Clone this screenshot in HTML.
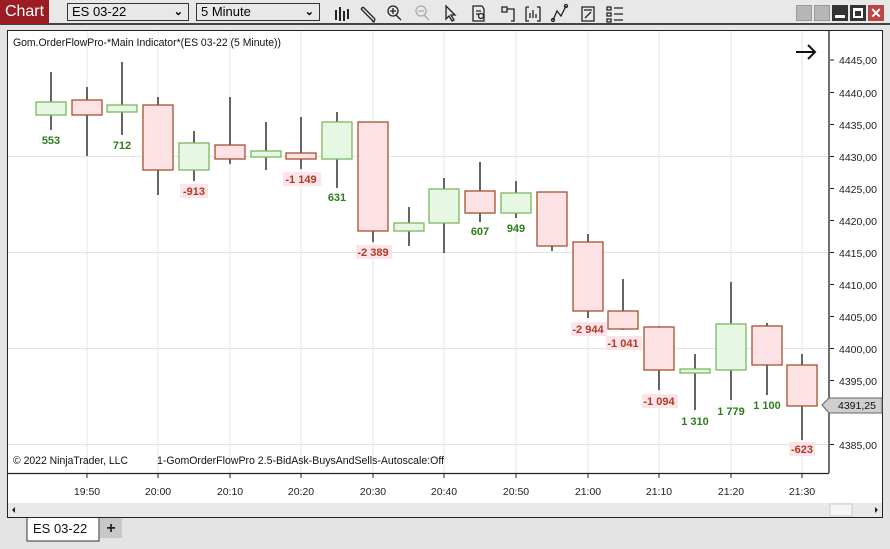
<!DOCTYPE html>
<html><head><meta charset="utf-8"><style>
*{margin:0;padding:0;box-sizing:border-box}
body{width:890px;height:549px;overflow:hidden;background:#e4e4e4;font-family:"Liberation Sans",Arial,sans-serif;position:relative}
.top{position:absolute;left:0;top:0;width:890px;height:25px;background:#e8e8e8;border-bottom:2px solid #444}
.chartbtn{position:absolute;left:0;top:0;width:49px;height:24px;background:#9b1c22;color:#fff;font-size:16px;line-height:24px;text-align:center}
.dd{position:absolute;top:3px;height:18px;border:1px solid #333;background:#e8e8e8;font-size:13px;line-height:16px;padding-left:4px}
.dd span{position:absolute;right:5px;top:0;font-size:11px;font-weight:bold}
.wb{position:absolute;top:5px;width:16px;height:16px}
</style></head><body>
<div class="top">
 <div class="chartbtn">Chart</div>
 <div class="dd" style="left:67px;width:122px">ES 03-22<span>&#8964;</span></div>
 <div class="dd" style="left:196px;width:124px">5 Minute<span>&#8964;</span></div>
 <svg style="position:absolute;left:330px;top:3px" width="300" height="20" fill="none" stroke="#222" stroke-width="1.3">
  <path d="M6 7v10M10 4v14M14 8v10M18 6v10" stroke-width="2"/>
  <path d="M33 4l12 12M31 6l12 12M33 4l-2 2M45 16l-1 3-2-1"/>
  <circle cx="63" cy="8" r="5"/><path d="M66 12l5 5M60 8h6M63 5v6"/>
  <circle cx="91" cy="8" r="5" stroke="#aaa"/><path d="M94 12l5 5M88 8h6" stroke="#aaa"/>
  <path d="M116 3v13l3-3 3 5 2-1-3-5h4z"/>
  <path d="M143 3h9l2 3v12h-11z M146 8h5M146 11h3"/><circle cx="151" cy="13" r="2.5"/>
  <path d="M172 4h5v5h-5zM172 4v0M177 6h7v12h-3M184 6v12"/>
  <path d="M196 4v14h3M210 4v14h-3M196 4h3M207 4h3M200 15v-5M203 15v-8M206 15v-4"/>
  <path d="M223 17l4-9 4 5 5-10"/><circle cx="223" cy="17" r="1.5"/><circle cx="236" cy="3" r="1.5"/>
  <path d="M252 4h12v14h-12zM254 7h8M255 15l6-6"/>
  <path d="M277 4h4v3h-4zM277 10h4v3h-4zM277 16h4v3h-4zM284 5h9M284 11h9M284 17h9"/>
 </svg>
 <div class="wb" style="left:796px;background:#b7b7b7;border:1px solid #999"></div>
 <div class="wb" style="left:814px;background:#b7b7b7;border:1px solid #999"></div>
 <div class="wb" style="left:832px;background:#333"><div style="position:absolute;left:3px;top:10px;width:10px;height:3px;background:#fff"></div></div>
 <div class="wb" style="left:850px;background:#333"><div style="position:absolute;left:3px;top:3px;width:10px;height:10px;border:2px solid #fff;border-top-width:3px"></div></div>
 <div class="wb" style="left:868px;background:#b44;color:#fff;font-size:14px;font-weight:bold;line-height:16px;text-align:center">✕</div>
</div>
<div style="position:absolute;left:7px;top:30px;width:876px;height:488px;background:#fff;border:1px solid #222"></div>
<svg style="position:absolute;left:0;top:0" width="890" height="549" font-family="Liberation Sans, Arial, sans-serif">
 <g stroke="#e4e4e4" stroke-width="1">
  <path d="M87 31v442M158 31v442M230 31v442M301 31v442M373 31v442M444 31v442M516 31v442M588 31v442M659 31v442M731 31v442M802 31v442"/>
  <path d="M8 156.5h821M8 252.5h821M8 348.5h821M8 444.5h821"/>
 </g>
 <path d="M829 31v442M8 473.5h821" stroke="#222" stroke-width="1.3"/>
 <text x="13" y="46" font-size="11" fill="#111" textLength="268" lengthAdjust="spacingAndGlyphs">Gom.OrderFlowPro-*Main Indicator*(ES 03-22 (5 Minute))</text>
 <path d="M796 52h18M808 45l7 7-7 7" stroke="#111" stroke-width="2" fill="none"/>
 <g font-size="10.5" fill="#222">
  <text x="839" y="64">4445,00</text><text x="839" y="97">4440,00</text><text x="839" y="129">4435,00</text>
  <text x="839" y="161">4430,00</text><text x="839" y="193">4425,00</text><text x="839" y="225">4420,00</text>
  <text x="839" y="257">4415,00</text><text x="839" y="289">4410,00</text><text x="839" y="321">4405,00</text>
  <text x="839" y="353">4400,00</text><text x="839" y="385">4395,00</text><text x="839" y="449">4385,00</text>
 </g>
 <g stroke="#222"><path d="M830 60h4M830 92.5h4M830 124.5h4M830 156.5h4M830 188.5h4M830 220.5h4M830 252.5h4M830 284.5h4M830 316.5h4M830 348.5h4M830 380.5h4M830 444.5h4"/></g>
 <path d="M822 405l7-7h53v15h-53z" fill="#cfcfcf" stroke="#666"/>
 <text x="838" y="409" font-size="10.5" fill="#111">4391,25</text>
 <g font-size="11" fill="#111">
  <text x="13" y="464" textLength="115" lengthAdjust="spacingAndGlyphs">© 2022 NinjaTrader, LLC</text>
  <text x="157" y="464" textLength="287" lengthAdjust="spacingAndGlyphs">1-GomOrderFlowPro 2.5-BidAsk-BuysAndSells-Autoscale:Off</text>
 </g>
 <g font-size="10.5" fill="#222" text-anchor="middle">
  <text x="87" y="495">19:50</text><text x="158" y="495">20:00</text><text x="230" y="495">20:10</text><text x="301" y="495">20:20</text><text x="373" y="495">20:30</text><text x="444" y="495">20:40</text><text x="516" y="495">20:50</text><text x="588" y="495">21:00</text><text x="659" y="495">21:10</text><text x="731" y="495">21:20</text><text x="802" y="495">21:30</text>
 </g>
 <g stroke="#222"><path d="M87 474v4M158 474v4M230 474v4M301 474v4M373 474v4M444 474v4M516 474v4M588 474v4M659 474v4M731 474v4M802 474v4"/></g>
 <rect x="8" y="503" width="874" height="14" fill="#e8e8e8"/>
 <path d="M12 510l3-3v6z" fill="#222"/><path d="M878 510l-3-3v6z" fill="#222"/>
 <rect x="830" y="504" width="22" height="12" fill="#f4f4f4" stroke="#ccc"/>
 <g stroke="#222" stroke-width="1.4">
  <path d="M51 72v58M87 87v69M122 62v73M158 97v98M194 131v50M230 97v67M266 122v48M301 117v52M337 112v76M373 122v120M409 207v39M444 178v75M480 162v60M516 181v37M552 192v59M588 234v84M623 279v51M659 326v64M695 354v56M731 282v118M767 323v72M802 354v86"/>
 </g>
 <g stroke="#7cb65e" fill="#e6f8e4" stroke-width="1.3">
  <rect x="36" y="102" width="30" height="13"/><rect x="107" y="105" width="30" height="7"/>
  <rect x="179" y="143" width="30" height="27"/><rect x="251" y="151" width="30" height="6"/>
  <rect x="322" y="122" width="30" height="37"/><rect x="394" y="223" width="30" height="8"/>
  <rect x="429" y="189" width="30" height="34"/><rect x="501" y="193" width="30" height="20"/>
  <rect x="680" y="369" width="30" height="4"/><rect x="716" y="324" width="30" height="46"/>
 </g>
 <g stroke="#a8502c" fill="#fde2e6" stroke-width="1.3">
  <rect x="72" y="100" width="30" height="15"/><rect x="143" y="105" width="30" height="65"/>
  <rect x="215" y="145" width="30" height="14"/><rect x="286" y="153" width="30" height="6"/>
  <rect x="358" y="122" width="30" height="109"/><rect x="465" y="191" width="30" height="22"/>
  <rect x="537" y="192" width="30" height="54"/><rect x="573" y="242" width="30" height="69"/>
  <rect x="608" y="311" width="30" height="18"/><rect x="644" y="327" width="30" height="43"/>
  <rect x="752" y="326" width="30" height="39"/><rect x="787" y="365" width="30" height="41"/>
 </g>
 <g font-size="11" font-weight="bold" text-anchor="middle">
  <g fill="#fde4ea"><rect x="180" y="184" width="28" height="14"/><rect x="283" y="172" width="38" height="14"/><rect x="356" y="245" width="36" height="14"/><rect x="571" y="322" width="36" height="14"/><rect x="606" y="336" width="36" height="14"/><rect x="642" y="394" width="36" height="14"/><rect x="789" y="442" width="26" height="14"/></g>
  <g fill="#2e7d1e">
   <text x="51" y="144">553</text><text x="122" y="149">712</text><text x="337" y="201">631</text><text x="480" y="235">607</text><text x="516" y="232">949</text><text x="695" y="425">1 310</text><text x="731" y="415">1 779</text><text x="767" y="409">1 100</text>
  </g>
  <g fill="#b03a22">
   <text x="194" y="195">-913</text><text x="301" y="183">-1 149</text><text x="373" y="256">-2 389</text><text x="588" y="333">-2 944</text><text x="623" y="347">-1 041</text><text x="659" y="405">-1 094</text><text x="802" y="453">-623</text>
  </g>
 </g>
 <path d="M27 518v23h72v-23" fill="#fff" stroke="#333"/>
 <text x="33" y="533" font-size="13" fill="#111">ES 03-22</text>
 <rect x="100" y="518" width="22" height="20" fill="#c8c8c8"/>
 <text x="111" y="533" font-size="16" font-weight="bold" text-anchor="middle" fill="#222">+</text>
</svg>
</body></html>
